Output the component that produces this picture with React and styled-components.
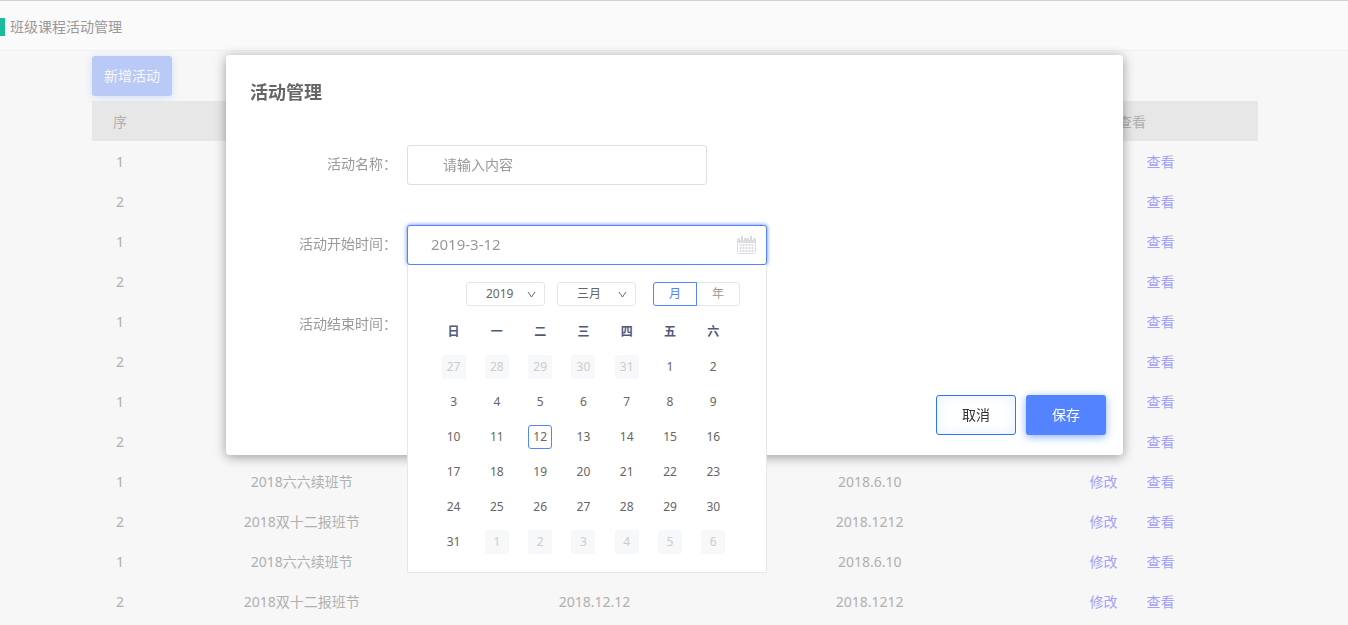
import React, { useState } from "react";
import styled, { createGlobalStyle, css } from "styled-components";

const GlobalStyle = createGlobalStyle`
  *, *::before, *::after { box-sizing: border-box; }
  body {
    margin: 0;
    background: #f7f7f7;
    color: #999;
    font-family: "Noto Sans", "Noto Sans CJK SC", sans-serif;
    font-size: 14px;
    line-height: 20px;
  }
  button, input, select { font: inherit; color: inherit; margin: 0; }
  a { text-decoration: none; }
`;

const Page = styled.div`
  min-height: 100vh;
`;

const TopBar = styled.header`
  display: flex;
  align-items: center;
  height: 51px;
  padding-top: 2px;
  border-top: 1px solid #d0d0d0;
  border-bottom: 1px solid #f0f0f0;
  background: #fafafa;
`;

const PageTitle = styled.h1`
  display: flex;
  align-items: center;
  gap: 5px;
  margin: 0;
  font-size: 14px;
  font-weight: 400;
  color: #999;

  &::before {
    content: "";
    width: 5px;
    height: 18px;
    background: #1abc9c;
  }
`;

const Content = styled.main`
  padding: 5px 90px 0 92px;
`;

const AddButton = styled.button`
  display: block;
  width: 80px;
  height: 40px;
  padding: 0;
  margin-bottom: 5px;
  border: 0;
  border-radius: 3px;
  background: #b9caf7;
  color: #f7f7f7;
  box-shadow: 0 2px 8px #d6dff8;
`;

const ActivityTable = styled.table`
  width: 100%;
  table-layout: fixed;
  border-collapse: collapse;
  text-align: center;
  color: #b0b0b0;

  th, td {
    height: 40px;
    padding: 2px 0 0;
    font-weight: 400;
  }
  thead { background: #e7e7e7; }
`;

const Column = styled.col`
  width: ${(p) => p.$share}%;
`;

const Actions = styled.div`
  display: flex;
  justify-content: center;
  gap: 29px;
`;

const ActionLink = styled.a`
  color: #a3a1fa;
`;

const Overlay = styled.div`
  position: fixed;
  inset: 0;
  display: flex;
  justify-content: center;
  align-items: flex-start;
  padding: 55px 0 0 1px;
`;

const Dialog = styled.section`
  width: 66.6%;
  min-width: 600px;
  padding: 24px 17px 20px 24px;
  border-radius: 4px;
  background: #fff;
  box-shadow: 0 2px 12px rgba(0, 0, 0, 0.38);
`;

const DialogTitle = styled.h2`
  margin: 0 0 40px;
  font-size: 18px;
  line-height: 26px;
  font-weight: 700;
  color: #666;
`;

const Form = styled.form`
  display: flex;
  flex-direction: column;
  gap: 40px;
`;

const FormRow = styled.div`
  display: flex;
  align-items: center;
  gap: 10px;
`;

const FieldLabel = styled.label`
  width: 147px;
  text-align: right;
  padding-bottom: 2px;
`;

const Field = styled.div`
  position: relative;
  width: ${(p) => p.$width}px;
`;

const TextInput = styled.input`
  display: block;
  width: 100%;
  height: 40px;
  padding: 0 35px 2px;
  border: 1px solid #dcdfe6;
  border-radius: 3px;
  background: #fff;
  outline: none;

  &::placeholder { color: #999; opacity: 1; }
`;

const DateInput = styled(TextInput)`
  padding: 0 40px 2px 23px;
  font-size: 15px;
  ${(p) =>
    p.$active &&
    css`
      border-color: #5483ff;
      box-shadow: 0 0 4px #5483ff;
    `}
`;

const FieldIcon = styled.span`
  position: absolute;
  top: 11px;
  right: 10px;
  display: flex;
`;

const Calendar = styled.div`
  position: absolute;
  z-index: 2;
  top: 100%;
  left: 0;
  right: 0;
  height: 308px;
  padding: 17px 31px 0 24px;
  border: 1px solid #e4e6ea;
  border-top: 0;
  background: #fff;
  font-size: 12px;
  line-height: 18px;
  color: #666;
`;

const CalendarTools = styled.div`
  display: flex;
  justify-content: flex-end;
  margin-right: -5px;
`;

const SelectBox = styled.div`
  position: relative;
  width: 79px;
  margin-right: ${(p) => (p.$last ? 17 : 12)}px;
  color: #666;

  select {
    display: block;
    appearance: none;
    width: 100%;
    height: 24px;
    padding: 0 19px;
    border: 1px solid #e4e6ea;
    border-radius: 3px;
    background: #fff;
    line-height: 20px;
  }
  svg {
    position: absolute;
    top: 9px;
    right: 9px;
    pointer-events: none;
  }
`;

const ModeSwitch = styled.div`
  display: flex;
`;

const ModeOption = styled.label`
  position: relative;
  display: flex;
  align-items: center;
  justify-content: center;
  width: 44px;
  height: 24px;
  border: 1px solid #e4e6ea;
  color: #999;

  &:first-child { border-radius: 3px 0 0 3px; }
  &:last-child { border-radius: 0 3px 3px 0; margin-left: -1px; }
  &:has(input:checked) {
    z-index: 1;
    border-color: #5483ff;
    color: #5483ff;
  }
  input {
    position: absolute;
    inset: 0;
    width: 100%;
    height: 100%;
    margin: 0;
    opacity: 0;
  }
`;

const DaysTable = styled.table`
  width: 100%;
  margin-top: 8px;
  table-layout: fixed;
  border-collapse: collapse;
  text-align: center;

  th, td { height: 35px; padding: 0; }
  th { padding-top: 1px; color: #50597b; font-weight: 700; }
`;

const Day = styled.button`
  display: block;
  width: 24px;
  height: 24px;
  margin: 0 auto;
  padding: 0;
  border: 1px solid ${(p) => (p.$selected ? "#5483ff" : "transparent")};
  border-radius: 3px;
  background: ${(p) => (p.$outside ? "#f7f8fa" : "transparent")};
  color: ${(p) => (p.$outside ? "#ccc" : "#666")};
`;

const DialogFooter = styled.footer`
  display: flex;
  justify-content: flex-end;
  gap: 10px;
  margin-top: 50px;
`;

const DialogButton = styled.button`
  width: 80px;
  height: 40px;
  padding: 0;
  border-radius: 3px;
  ${(p) =>
    p.$primary
      ? css`
          border: 0;
          background: #5483ff;
          color: #fff;
          box-shadow: 0 2px 8px rgba(64, 128, 255, 0.6);
        `
      : css`
          border: 1px solid #2f74ff;
          background: #fff;
          color: #333;
          box-shadow: inset 0 0 14px #e6f1ff;
        `}
`;

function CalendarIcon() {
  return (
    <svg width="20" height="18" viewBox="0 0 20 18" aria-hidden="true">
      <rect x="0.5" y="2.5" width="18" height="15" rx="1" fill="#fff" stroke="#dcdde2" />
      <path d="M0 3h19v4H0z" fill="#dcdde2" />
      <path d="M5 1v3M14 1v3" stroke="#fff" strokeWidth="4" />
      <path d="M5 0v4M14 0v4" stroke="#d5d7dd" strokeWidth="2" />
      <g stroke="#dcdde2" strokeWidth="2" strokeDasharray="2 1">
        <path d="M2.5 9h14M2.5 12h14M2.5 15h14" />
      </g>
    </svg>
  );
}

function ChevronIcon() {
  return (
    <svg width="9" height="8" viewBox="0 0 9 8" fill="none" aria-hidden="true">
      <path d="M1 1l3.5 5L8 1" stroke="#666" />
    </svg>
  );
}

const spring = { name: "2018六六续班节", start: "2018.6.6", end: "2018.6.10" };
const winter = { name: "2018双十二报班节", start: "2018.12.12", end: "2018.1212" };
const activities = Array.from({ length: 12 }, (_, i) =>
  i % 2 ? { no: 2, ...winter } : { no: 1, ...spring }
);

const weekdays = ["日", "一", "二", "三", "四", "五", "六"];
const DAYS_IN_MONTH = 31;
const weeks = Array.from({ length: 6 }, (_, w) =>
  Array.from({ length: 7 }, (_, d) => {
    const id = w * 7 + d - 4;
    if (id < 1) return { id, day: id + 31, outside: true };
    if (id > DAYS_IN_MONTH) return { id, day: id - DAYS_IN_MONTH, outside: true };
    return { id, day: id, outside: false };
  })
);

function DatePanel({ selected, onSelect }) {
  return (
    <Calendar>
      <CalendarTools>
        <SelectBox>
          <select aria-label="年份" defaultValue="2019">
            <option>2018</option>
            <option>2019</option>
            <option>2020</option>
          </select>
          <ChevronIcon />
        </SelectBox>
        <SelectBox $last>
          <select aria-label="月份" defaultValue="三月">
            <option>二月</option>
            <option>三月</option>
            <option>四月</option>
          </select>
          <ChevronIcon />
        </SelectBox>
        <ModeSwitch>
          <ModeOption>
            <input type="radio" name="mode" defaultChecked />月
          </ModeOption>
          <ModeOption>
            <input type="radio" name="mode" />年
          </ModeOption>
        </ModeSwitch>
      </CalendarTools>
      <DaysTable>
        <thead>
          <tr>
            {weekdays.map((d) => (
              <th key={d} scope="col">{d}</th>
            ))}
          </tr>
        </thead>
        <tbody>
          {weeks.map((week) => (
            <tr key={week[0].id}>
              {week.map(({ day, outside, id }) => (
                <td key={id}>
                  <Day
                    type="button"
                    $outside={outside}
                    $selected={id === selected}
                    onClick={() => !outside && onSelect(id)}
                  >
                    {day}
                  </Day>
                </td>
              ))}
            </tr>
          ))}
        </tbody>
      </DaysTable>
    </Calendar>
  );
}

export default function App() {
  const [day, setDay] = useState(12);

  return (
    <>
      <GlobalStyle />
      <Page>
        <TopBar>
          <PageTitle>班级课程活动管理</PageTitle>
        </TopBar>
        <Content>
          <AddButton type="button">新增活动</AddButton>
          <ActivityTable>
            <colgroup>
              <Column $share={4.8} />
              <Column $share={26.4} />
              <Column $share={23.8} />
              <Column $share={23.4} />
              <Column $share={21.6} />
            </colgroup>
            <thead>
              <tr>
                <th scope="col">序</th>
                <th scope="col">活动名称</th>
                <th scope="col">开始时间</th>
                <th scope="col">结束时间</th>
                <th scope="col">查看</th>
              </tr>
            </thead>
            <tbody>
              {activities.map((a, i) => (
                <tr key={i}>
                  <td>{a.no}</td>
                  <td>{a.name}</td>
                  <td>{a.start}</td>
                  <td>{a.end}</td>
                  <td>
                    <Actions>
                      <ActionLink href="#edit">修改</ActionLink>
                      <ActionLink href="#view">查看</ActionLink>
                    </Actions>
                  </td>
                </tr>
              ))}
            </tbody>
          </ActivityTable>
        </Content>
      </Page>
      <Overlay>
        <Dialog role="dialog" aria-labelledby="dialog-title">
          <DialogTitle id="dialog-title">活动管理</DialogTitle>
          <Form>
            <FormRow>
              <FieldLabel htmlFor="name">活动名称：</FieldLabel>
              <Field $width={300}>
                <TextInput id="name" placeholder="请输入内容" />
              </Field>
            </FormRow>
            <FormRow>
              <FieldLabel htmlFor="start">活动开始时间：</FieldLabel>
              <Field $width={360}>
                <DateInput id="start" $active readOnly value={`2019-3-${day}`} />
                <FieldIcon>
                  <CalendarIcon />
                </FieldIcon>
                <DatePanel selected={day} onSelect={setDay} />
              </Field>
            </FormRow>
            <FormRow>
              <FieldLabel htmlFor="end">活动结束时间：</FieldLabel>
              <Field $width={360}>
                <DateInput id="end" />
              </Field>
            </FormRow>
          </Form>
          <DialogFooter>
            <DialogButton type="button">取消</DialogButton>
            <DialogButton type="button" $primary>保存</DialogButton>
          </DialogFooter>
        </Dialog>
      </Overlay>
    </>
  );
}
